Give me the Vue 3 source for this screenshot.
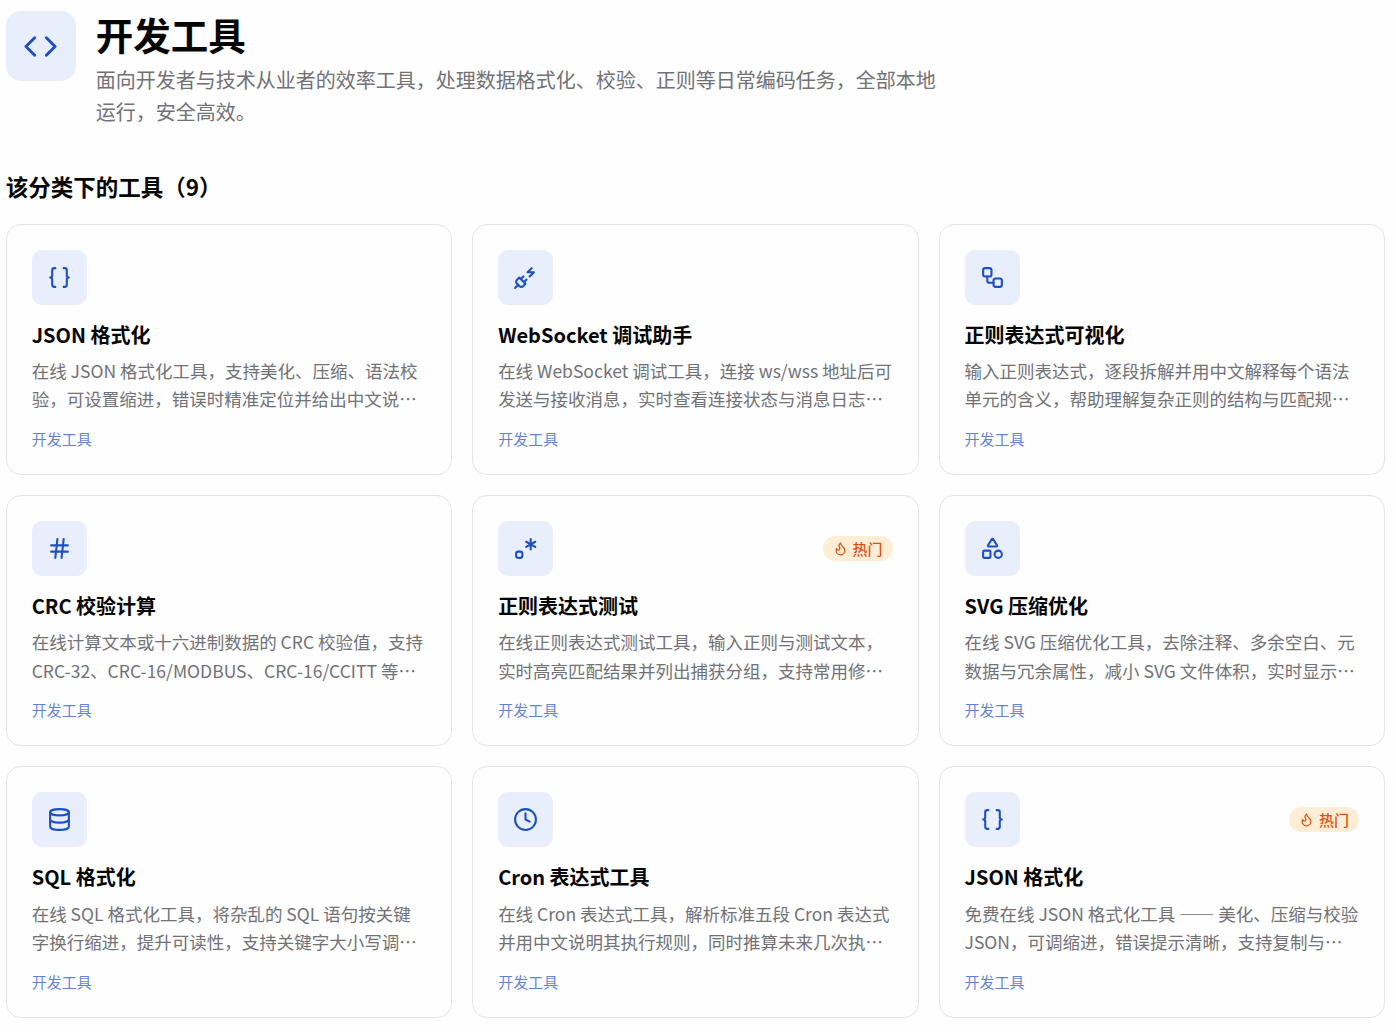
<template>
  <main class="page" lang="zh-CN">
    <header class="hero">
      <div class="hero-icon">
        <svg viewBox="0 0 24 24" class="icon">
          <path v-for="d in icons.code" :key="d" :d="d" />
        </svg>
      </div>
      <div class="hero-text">
        <h1>开发工具</h1>
        <p>面向开发者与技术从业者的效率工具，处理数据格式化、校验、正则等日常编码任务，全部本地运行，安全高效。</p>
      </div>
    </header>

    <section>
      <h2>该分类下的工具（{{ tools.length }}）</h2>
      <div class="grid">
        <article v-for="(tool, index) in tools" :key="index" class="card">
          <div class="card-top">
            <div class="card-icon">
              <svg viewBox="0 0 24 24" class="icon">
                <path v-for="d in icons[tool.icon]" :key="d" :d="d" />
              </svg>
            </div>
            <span v-if="tool.hot" class="badge">
              <svg viewBox="0 0 24 24" class="icon">
                <path v-for="d in icons.flame" :key="d" :d="d" />
              </svg>
              热门
            </span>
          </div>
          <h3>{{ tool.name }}</h3>
          <p class="desc">{{ tool.desc }}</p>
          <span class="category">开发工具</span>
        </article>
      </div>
    </section>
  </main>
</template>

<script setup>
const icons = {
  code: ['m16 18 6-6-6-6', 'm8 6-6 6 6 6'],
  braces: [
    'M8 3H7a2 2 0 0 0-2 2v5a2 2 0 0 1-2 2 2 2 0 0 1 2 2v5c0 1.1.9 2 2 2h1',
    'M16 21h1a2 2 0 0 0 2-2v-5c0-1.1.9-2 2-2a2 2 0 0 1-2-2V5a2 2 0 0 0-2-2h-1',
  ],
  plug: [
    'M6.3 20.3a2.4 2.4 0 0 0 3.4 0L12 18l-6-6-2.3 2.3a2.4 2.4 0 0 0 0 3.4Z',
    'm2 22 3-3',
    'M7.5 13.5 10 11',
    'M10.5 16.5 13 14',
    'm18 3-4 4h6l-4 4',
  ],
  workflow: [
    'M5 3h4a2 2 0 0 1 2 2v4a2 2 0 0 1-2 2H5a2 2 0 0 1-2-2V5a2 2 0 0 1 2-2Z',
    'M7 11v4a2 2 0 0 0 2 2h4',
    'M15 13h4a2 2 0 0 1 2 2v4a2 2 0 0 1-2 2h-4a2 2 0 0 1-2-2v-4a2 2 0 0 1 2-2Z',
  ],
  hash: ['M4 9h16', 'M4 15h16', 'M10 3 8 21', 'M16 3l-2 18'],
  regex: [
    'M17 3v10',
    'm12.67 5.5 8.66 5',
    'm12.67 10.5 8.66-5',
    'M9 17a2 2 0 0 0-2-2H5a2 2 0 0 0-2 2v2a2 2 0 0 0 2 2h2a2 2 0 0 0 2-2v-2z',
  ],
  shapes: [
    'M8.3 10a.7.7 0 0 1-.626-1.079L11.4 3a.7.7 0 0 1 1.198-.043L16.3 8.9a.7.7 0 0 1-.572 1.1Z',
    'M4 14h5a1 1 0 0 1 1 1v5a1 1 0 0 1-1 1H4a1 1 0 0 1-1-1v-5a1 1 0 0 1 1-1Z',
    'M21 17.5a3.5 3.5 0 1 1-7 0 3.5 3.5 0 0 1 7 0Z',
  ],
  database: [
    'M21 5c0 1.66-4.03 3-9 3S3 6.66 3 5s4.03-3 9-3 9 1.34 9 3Z',
    'M3 5v14a9 3 0 0 0 18 0V5',
    'M3 12a9 3 0 0 0 18 0',
  ],
  clock: ['M22 12a10 10 0 1 1-20 0 10 10 0 0 1 20 0Z', 'M12 6v6l4 2'],
  flame: [
    'M8.5 14.5A2.5 2.5 0 0 0 11 12c0-1.38-.5-2-1-3-1.072-2.143-.224-4.054 2-6 .5 2.5 2 4.9 4 6.5 2 1.6 3 3.5 3 5.5a7 7 0 1 1-14 0c0-1.153.433-2.294 1-3a2.5 2.5 0 0 0 2.5 2.5z',
  ],
};

const tools = [
  { name: 'JSON 格式化', icon: 'braces', desc: '在线 JSON 格式化工具，支持美化、压缩、语法校验，可设置缩进，错误时精准定位并给出中文说…' },
  { name: 'WebSocket 调试助手', icon: 'plug', desc: '在线 WebSocket 调试工具，连接 ws/wss 地址后可发送与接收消息，实时查看连接状态与消息日志…' },
  { name: '正则表达式可视化', icon: 'workflow', desc: '输入正则表达式，逐段拆解并用中文解释每个语法单元的含义，帮助理解复杂正则的结构与匹配规…' },
  { name: 'CRC 校验计算', icon: 'hash', desc: '在线计算文本或十六进制数据的 CRC 校验值，支持 CRC-32、CRC-16/MODBUS、CRC-16/CCITT 等…' },
  { name: '正则表达式测试', icon: 'regex', hot: true, desc: '在线正则表达式测试工具，输入正则与测试文本，实时高亮匹配结果并列出捕获分组，支持常用修…' },
  { name: 'SVG 压缩优化', icon: 'shapes', desc: '在线 SVG 压缩优化工具，去除注释、多余空白、元数据与冗余属性，减小 SVG 文件体积，实时显示…' },
  { name: 'SQL 格式化', icon: 'database', desc: '在线 SQL 格式化工具，将杂乱的 SQL 语句按关键字换行缩进，提升可读性，支持关键字大小写调…' },
  { name: 'Cron 表达式工具', icon: 'clock', desc: '在线 Cron 表达式工具，解析标准五段 Cron 表达式并用中文说明其执行规则，同时推算未来几次执…' },
  { name: 'JSON 格式化', icon: 'braces', hot: true, desc: '免费在线 JSON 格式化工具 —— 美化、压缩与校验 JSON，可调缩进，错误提示清晰，支持复制与…' },
];
</script>

<style>
body {
  margin: 0;
  background: #fefefe;
}
</style>

<style scoped>
.page {
  box-sizing: border-box;
  width: 1396px;
  height: 1032px;
  padding: 11px 11px 0 5.7px;
  overflow: hidden;
  color: #050506;
  font-family: "Noto Sans CJK SC", sans-serif;
}

h1,
h2,
h3,
p {
  margin: 0;
}

.icon {
  display: block;
  fill: none;
  stroke: currentColor;
  stroke-width: 2;
  stroke-linecap: round;
  stroke-linejoin: round;
}

.hero {
  display: flex;
  align-items: flex-start;
  gap: 20px;
}

.hero-icon,
.card-icon {
  display: flex;
  align-items: center;
  justify-content: center;
  flex-shrink: 0;
  background: #e8eefb;
  color: #1d4fc4;
}

.hero-icon {
  width: 70px;
  height: 70px;
  border-radius: 15px;
}

.hero-icon .icon {
  width: 35px;
  height: 35px;
}

h1 {
  font-size: 37.5px;
  line-height: 46.9px;
  font-weight: 700;
}

.hero-text p {
  max-width: 845px;
  margin-top: 6.5px;
  color: #717176;
  font-size: 20px;
  line-height: 32px;
}

h2 {
  margin-top: 40.4px;
  font-size: 22.5px;
  line-height: 35px;
  font-weight: 600;
}

.grid {
  display: grid;
  grid-template-columns: repeat(3, 1fr);
  gap: 20px;
  margin-top: 20px;
}

.card {
  display: flex;
  flex-direction: column;
  min-width: 0;
  padding: 25px;
  border: 1px solid #e4e4e7;
  border-radius: 15px;
  background: #fefefe;
}

.card-top {
  display: flex;
  align-items: center;
  justify-content: space-between;
}

.card-icon {
  width: 55px;
  height: 55px;
  border-radius: 10px;
}

.card-icon .icon {
  width: 25px;
  height: 25px;
}

.badge {
  display: flex;
  align-items: center;
  gap: 5px;
  padding: 2.5px 10px;
  border-radius: 999px;
  background: #ffedd5;
  color: #dd5210;
  font-size: 15px;
  line-height: 20px;
  font-weight: 500;
}

.badge .icon {
  width: 15px;
  height: 15px;
}

h3 {
  margin-top: 15px;
  font-size: 20px;
  line-height: 30px;
  font-weight: 600;
}

.desc {
  margin-top: 7.25px;
  color: #717176;
  font-size: 17.5px;
  line-height: 28.4375px;
}

.category {
  margin-top: 15.15px;
  color: #1d4fc4;
  font-size: 15px;
  line-height: 20px;
  opacity: 0.7;
}
</style>
